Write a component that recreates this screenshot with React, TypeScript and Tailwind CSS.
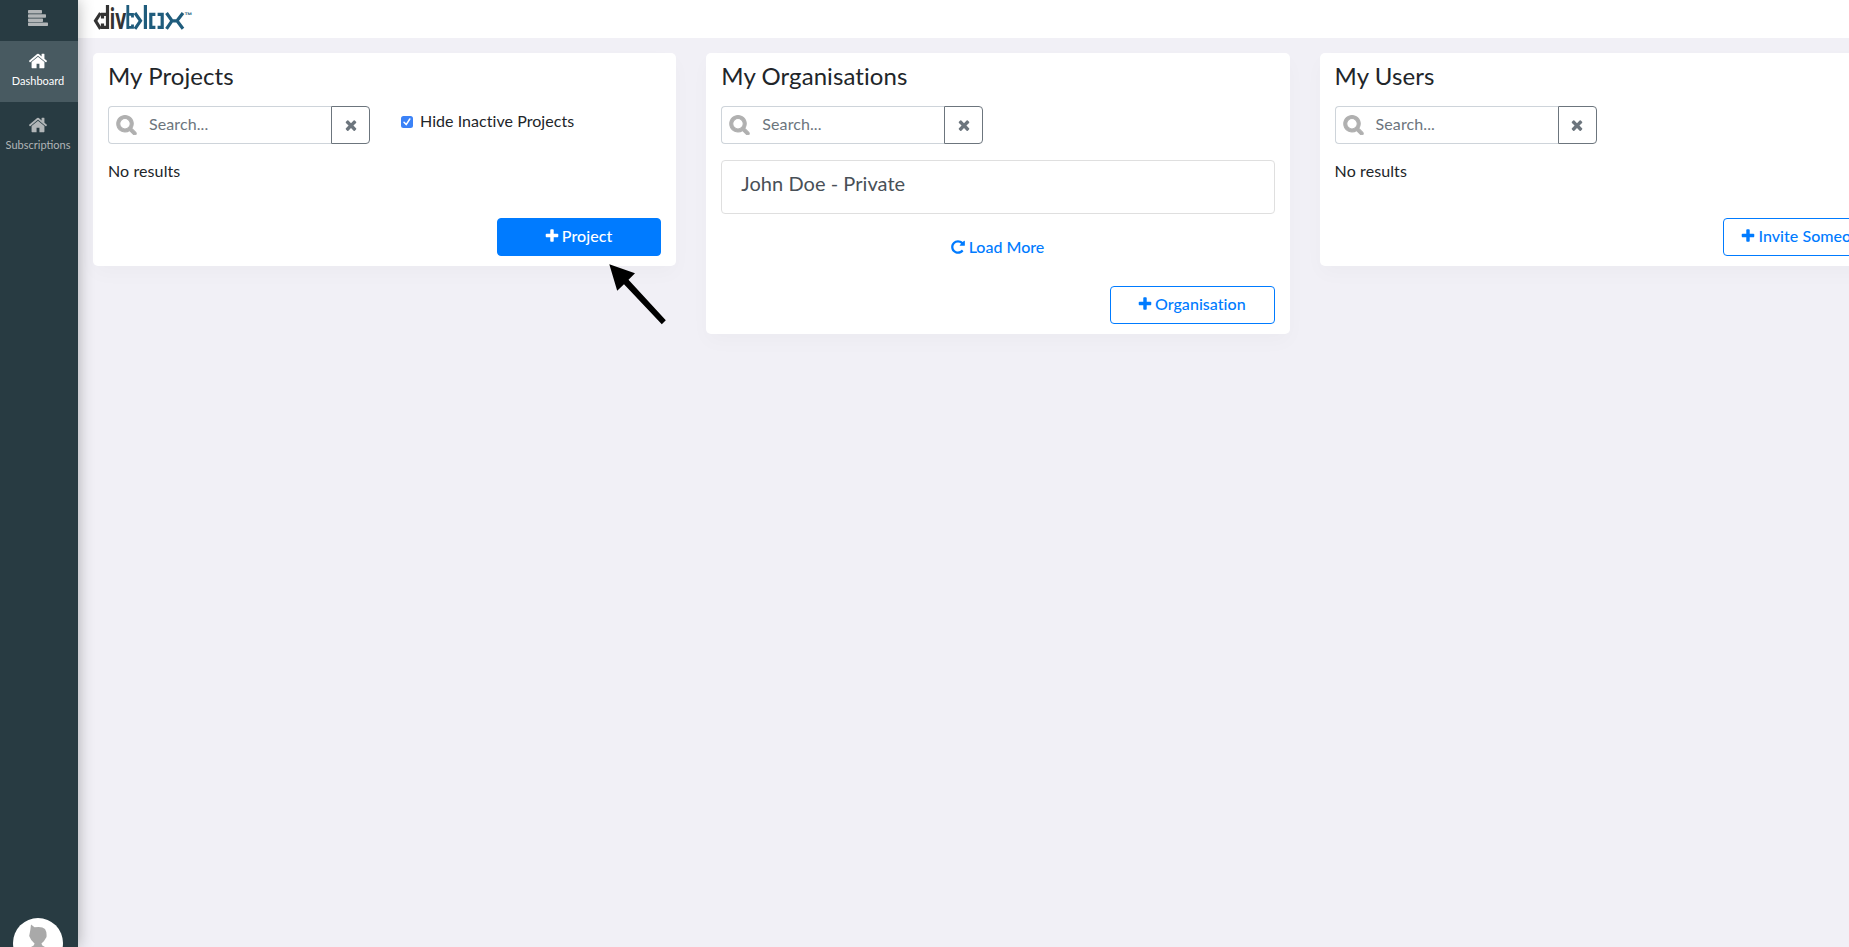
import React from "react";

const PATHS = {
  times:
    "M1490 1322q0 40-28 68l-136 136q-28 28-68 28t-68-28l-294-294-294 294q-28 28-68 28t-68-28l-136-136q-28-28-28-68t28-68l294-294-294-294q-28-28-28-68t28-68l136-136q28-28 68-28t68 28l294 294 294-294q28-28 68-28t68 28l136 136q28 28 28 68t-28 68l-294 294 294 294q28 28 28 68z",
  plus: "M1600 736v192q0 40-28 68t-68 28h-416v416q0 40-28 68t-68 28h-192q-40 0-68-28t-28-68v-416h-416q-40 0-68-28t-28-68v-192q0-40 28-68t68-28h416v-416q0-40 28-68t68-28h192q40 0 68 28t28 68v416h416q40 0 68 28t28 68z",
  repeat:
    "M1664 256v448q0 26-19 45t-45 19h-448q-42 0-59-40-17-39 14-69l138-138q-148-137-349-137-104 0-198.5 40.5t-163.5 109.5-109.5 163.5-40.5 198.5 40.5 198.5 109.5 163.5 163.5 109.5 198.5 40.5q119 0 225-52t179-147q7-10 23-12 15 0 25 9l137 138q9 8 9.5 20.5t-7.5 22.5q-109 132-264 204.5t-327 72.5q-156 0-298-61t-245-164-164-245-61-298 61-298 164-245 245-164 298-61q147 0 284.5 55.5t244.5 156.5l130-129q29-31 70-14 39 17 39 59z",
  home: "M1472 992v480q0 26-19 45t-45 19h-384v-384h-256v384h-384q-26 0-45-19t-19-45v-480q0-1 .5-3t.5-3l575-474 575 474q1 2 1 6zm223-69l-62 74q-8 9-21 11h-3q-13 0-21-7l-692-577-692 577q-12 8-24 7-13-2-21-11l-62-74q-8-10-7-23.5t11-21.5l719-599q32-26 76-26t76 26l244 204v-195q0-14 9-23t23-9h192q14 0 23 9t9 23v408l219 182q10 8 11 21.5t-7 23.5z",
  search:
    "M1216 832q0-185-131.5-316.5t-316.5-131.5-316.5 131.5-131.5 316.5 131.5 316.5 316.5 131.5 316.5-131.5 131.5-316.5zm512 832q0 52-38 90t-90 38q-54 0-90-38l-343-342q-179 124-399 124-143 0-273.5-55.5t-225-150-150-225-55.5-273.5 55.5-273.5 150-225 225-150 273.5-55.5 273.5 55.5 225 150 150 225 55.5 273.5q0 220-124 399l343 343q37 37 37 90z",
};

function Icon({ name, className }: { name: keyof typeof PATHS; className: string }) {
  return (
    <svg viewBox="0 0 1792 1792" fill="currentColor" className={`shrink-0 ${className}`}>
      <path d={PATHS[name]} />
    </svg>
  );
}

function Logo() {
  return (
    <svg width="104" height="30" viewBox="0 0 104 30" className="mt-[4px] shrink-0 overflow-visible">
      <g fill="none" stroke="#333333" strokeWidth="3.2">
        <path d="M7.5 9 L2.5 16.8 L7.5 24.8" />
        <path d="M14.5 1 V25 M14 23.3 H9.5 V19.5 M14 10.4 H9.5 V14.5" />
      </g>
      <text x="16.4" y="25" fontSize="28" fill="#333333" className="font-['Open_Sans',sans-serif] font-bold" textLength="16.8" lengthAdjust="spacingAndGlyphs">
        iv
      </text>
      <g fill="none" stroke="#1f5c7c" strokeWidth="3.2">
        <path d="M34.8 1 V25 M34.8 10.4 H39.5 V13.5 M34.8 23.3 H39.5 V20.5" strokeWidth="2.8" />
        <path d="M42 9 L47.5 16.8 L42 24.8" />
        <path d="M52.4 1 V25" />
        <path d="M62.4 10.4 H57.8 V23.3 H62.4 M64.6 10.4 H69.2 V23.3 H64.6" />
        <path d="M73.5 9 L79 16.8 L73.5 24.8 M90 9 L84 16.8 L90 24.8 M78 16.8 H85" />
      </g>
      <text x="91.5" y="13.5" fontSize="8" fill="#1f5c7c" className="font-['Liberation_Sans',sans-serif] font-bold">
        ™
      </text>
    </svg>
  );
}

function SearchBox() {
  return (
    <div className="flex h-[38px] w-[262px]">
      <div className="flex w-[223px] items-center rounded-l border border-r-0 border-[#ced4da] pb-px pl-[7px]">
        <Icon name="search" className="mb-px size-[21px] stroke-[#b0b0b0] stroke-[90] text-[#b0b0b0]" />
        <span className="mb-px ml-[12px] text-[16px] tracking-[0.1px] text-[#6c757d]">Search...</span>
      </div>
      <button className="flex w-[39px] items-center justify-center rounded-r border border-[#6c757d] pb-px text-[#6c757d]">
        <Icon name="times" className="size-4" />
      </button>
    </div>
  );
}

function Card({ title, height, children }: { title: string; height: string; children: React.ReactNode }) {
  return (
    <section className={`flex w-[583.3px] shrink-0 flex-col rounded-[5px] bg-white px-[15px] pt-[8px] pb-[10px] shadow-[0_8px_20px_rgba(0,0,0,0.025)] ${height}`}>
      <h2 className="h-[45px] text-[24px] leading-[30px] tracking-[0.08px] text-[#212529]">{title}</h2>
      {children}
    </section>
  );
}

function AddButton({ label, className }: { label: string; className: string }) {
  return (
    <button className={`mt-auto flex h-[38px] w-[164.5px] items-center justify-center gap-[2px] self-end rounded border border-[#007bff] pr-[2px] pb-[2px] text-[16px] font-medium whitespace-nowrap ${className}`}>
      <Icon name="plus" className="size-4" />
      <span className="tracking-[0.05px]">{label}</span>
    </button>
  );
}

export default function App() {
  return (
    <div className="flex h-[947px] w-full overflow-hidden bg-[#f1f0f6] font-[Lato,sans-serif] text-[16px] text-[#212529]">
      <aside className="relative z-10 flex w-[78px] shrink-0 flex-col items-center bg-[#283b42] text-[#b1b5b7] shadow-[0_0_15px_rgba(0,0,0,0.3)]">
        <div className="flex h-[41px] w-full shrink-0 justify-center pt-[10px] pr-[2px]">
          <svg width="20" height="16" viewBox="0 0 20 16" fill="currentColor">
            <rect width="14" height="3.5" rx=".7" />
            <rect y="4.2" width="18" height="3.5" rx=".7" />
            <rect y="8.4" width="15" height="3.5" rx=".7" />
            <rect y="12.5" width="20" height="3.5" rx=".7" />
          </svg>
        </div>
        <div className="flex h-[61px] w-full shrink-0 flex-col items-center bg-[#485a61] pt-[10px] pr-[2px] text-white">
          <Icon name="home" className="size-5" />
          <span className="mt-[2px] text-[11px] leading-[16px]">Dashboard</span>
        </div>
        <div className="flex h-[64px] w-full shrink-0 flex-col items-center pt-[13px] pr-[2px]">
          <Icon name="home" className="size-5" />
          <span className="mt-[2px] text-[11px] leading-[16px]">Subscriptions</span>
        </div>
        <div className="mt-auto mr-[2px] h-[29px] w-[50px] shrink-0 overflow-hidden">
          <svg width="50" height="50" viewBox="0 0 50 50">
            <circle cx="25" cy="25" r="25" fill="#fff" />
            <path d="M18 6.5 L21.5 9.3 Q29 8 32 11 Q34 14 33.5 19 Q31.5 23 28.5 25.5 Q28 29 40 31 V50 H10 V31 Q22 29 21.5 25.5 Q18 23 16.2 18 Q17.5 12 18 6.5Z" fill="#a9a9a9" />
          </svg>
        </div>
      </aside>
      <div className="flex w-[1771px] shrink-0 flex-col">
        <header className="flex h-[38px] shrink-0 bg-white pl-[15px]">
          <Logo />
        </header>
        <main className="flex items-start gap-[30px] overflow-hidden pt-[15px] pb-10 pl-[15px]">
          <Card title="My Projects" height="h-[213px]">
            <div className="flex">
              <SearchBox />
              <label className="mt-[10px] ml-[31px] flex h-3 items-center gap-[7px]">
                <svg width="12" height="12" viewBox="0 0 12 12">
                  <rect width="12" height="12" rx="2.5" fill="#3b82f7" />
                  <path d="M3 6.2 L5.2 8.6 L8.8 3" fill="none" stroke="#fff" strokeWidth="1.5" strokeLinecap="round" strokeLinejoin="round" />
                </svg>
                <span className="mb-[2px] tracking-[0.05px]">Hide Inactive Projects</span>
              </label>
            </div>
            <p className="mt-[15px] leading-6 tracking-[0.1px]">No results</p>
            <AddButton label="Project" className="bg-[#007bff] text-white" />
          </Card>
          <Card title="My Organisations" height="h-[281px]">
            <SearchBox />
            <div className="mt-[16px] h-[54px] rounded border border-[#dfdfdf] pt-[10px] pl-[19px] text-[20px] leading-6 tracking-[0.05px] text-[#495057]">John Doe - Private</div>
            <div className="mt-[21px] flex h-6 items-center justify-center gap-[3px] pr-[2px] font-medium text-[#007bff]">
              <Icon name="repeat" className="size-4" />
              <span>Load More</span>
            </div>
            <AddButton label="Organisation" className="text-[#007bff]" />
          </Card>
          <Card title="My Users" height="h-[213px]">
            <SearchBox />
            <p className="mt-[15px] leading-6 tracking-[0.1px]">No results</p>
            <AddButton label="Invite Someone" className="text-[#007bff]" />
          </Card>
        </main>
      </div>
      <svg width="60" height="64" viewBox="0 0 60 64" className="pointer-events-none absolute top-[263px] left-[608px]">
        <path d="M1.3 1.2 L27 10.3 L20.5 16.8 L57.8 57.2 L53.8 61.3 L16 21.3 L9.2 27.8 Z" fill="#000" />
      </svg>
    </div>
  );
}
